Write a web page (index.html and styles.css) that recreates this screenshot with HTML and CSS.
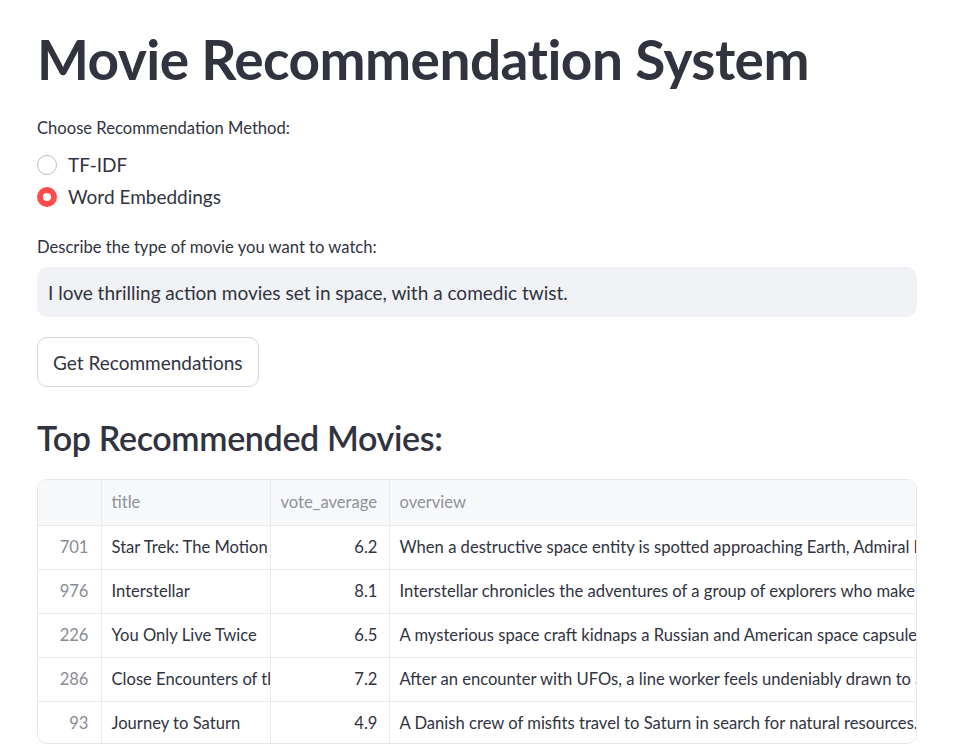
FILE: index.html
```html
<!DOCTYPE html>
<html>
<head>
<meta charset="utf-8">
<title>Movie Recommendation System</title>
<link rel="stylesheet" href="styles.css">
</head>
<body>
<main class="main">
  <h1 class="title">Movie Recommendation System</h1>

  <div class="field">
    <label class="label">Choose Recommendation Method:</label>
    <div class="radios">
      <div class="radio"><span class="dot"></span><span>TF-IDF</span></div>
      <div class="radio checked"><span class="dot"></span><span>Word Embeddings</span></div>
    </div>
  </div>

  <div class="field field-input">
    <label class="label">Describe the type of movie you want to watch:</label>
    <div class="input">I love thrilling action movies set in space, with a comedic twist.</div>
  </div>

  <button class="btn">Get Recommendations</button>

  <h3 class="subtitle">Top Recommended Movies:</h3>

  <div class="grid-wrap">
    <table class="grid">
      <colgroup>
        <col class="c-idx"><col class="c-title"><col class="c-vote"><col class="c-over">
      </colgroup>
      <thead>
        <tr><th></th><th>title</th><th>vote_average</th><th>overview</th></tr>
      </thead>
      <tbody>
        <tr><td class="idx">701</td><td>Star Trek: The Motion Picture</td><td class="num">6.2</td><td>When a destructive space entity is spotted approaching Earth, Admiral Kirk resumes command of the Starship Enterprise</td></tr>
        <tr><td class="idx">976</td><td>Interstellar</td><td class="num">8.1</td><td>Interstellar chronicles the adventures of a group of explorers who make use of a newly discovered wormhole</td></tr>
        <tr><td class="idx">226</td><td>You Only Live Twice</td><td class="num">6.5</td><td>A mysterious space craft kidnaps a Russian and American space capsule and brings the world to the brink</td></tr>
        <tr><td class="idx">286</td><td>Close Encounters of the Third Kind</td><td class="num">7.2</td><td>After an encounter with UFOs, a line worker feels undeniably drawn to an isolated area in the wilderness</td></tr>
        <tr><td class="idx">93</td><td>Journey to Saturn</td><td class="num">4.9</td><td>A Danish crew of misfits travel to Saturn in search for natural resources.</td></tr>
      </tbody>
    </table>
  </div>
</main>
</body>
</html>
```
FILE: styles.css
```css
* { box-sizing: border-box; }
html, body { margin: 0; padding: 0; background: #ffffff; }
body {
  font-family: "Lato", "Open Sans", sans-serif;
  color: #31333f;
  width: 954px;
  height: 754px;
  overflow: hidden;
}
.main {
  width: 954px;
  padding: 26px 37px 0 37px;
  display: flex;
  flex-direction: column;
  align-items: flex-start;
}
.title {
  margin: 0;
  font-size: 55px;
  line-height: 66px;
  font-weight: 700;
  letter-spacing: -0.55px;
  color: #31333f;
}
.field { display: flex; flex-direction: column; width: 100%; }
.label {
  font-size: 16.6px;
  line-height: 28px;
  margin-top: 22px;
}
.radios { display: flex; flex-direction: column; gap: 2px; margin-top: 8px; }
.radio {
  display: flex;
  align-items: center;
  gap: 11px;
  font-size: 19px;
  line-height: 30px;
}
.dot {
  width: 20px;
  height: 20px;
  border-radius: 50%;
  border: 1px solid #bcbdc2;
  background: #fff;
  position: relative;
}
.radio.checked .dot { border: none; background: #ff4b4b; }
.radio.checked .dot::after {
  content: "";
  position: absolute;
  left: 6px; top: 6px;
  width: 8px; height: 8px;
  border-radius: 50%;
  background: #fff;
}
.field-input .label { margin-top: 21px; }
.input {
  margin-top: 6px;
  height: 50px;
  width: 880px;
  background: #f0f2f6;
  border-radius: 10px;
  padding: 0 11px;
  display: flex;
  align-items: center;
  font-size: 19px;
}
.btn {
  margin-top: 20px;
  height: 50px;
  padding: 0 15px;
  background: #fff;
  border: 1px solid #d6d6d9;
  border-radius: 10px;
  font-family: inherit;
  font-size: 19px;
  color: #31333f;
}
.subtitle {
  margin: 30px 0 0 0;
  font-size: 34px;
  line-height: 42px;
  font-weight: 600;
  letter-spacing: -0.35px;
}
.grid-wrap {
  margin-top: 20px;
  width: 880px;
  height: 265px;
  border: 1px solid #e6e7ea;
  border-radius: 10px;
  overflow: hidden;
}
.grid {
  border-collapse: collapse;
  table-layout: fixed;
  width: 1100px;
  font-size: 16.6px;
}
.c-idx { width: 63px; }
.c-title { width: 169px; }
.c-vote { width: 119px; }
.c-over { width: 749px; }
.grid th, .grid td {
  border-right: 1px solid #ebebed;
  border-bottom: 1px solid #ebebed;
  white-space: nowrap;
  overflow: hidden;
  padding: 0 0 1px 10px;
  text-align: left;
  font-weight: 400;
}
.grid th {
  height: 45px;
  background: #f8f9fb;
  color: #8f9198;
}
.grid td { height: 44px; color: #31333f; }
.grid td.idx { text-align: right; padding: 0 12px 1px 0; color: #8a8c94; }
.grid td.num { text-align: right; padding: 0 11px 1px 0; }
.grid tr:last-child td { border-bottom: none; }
```
